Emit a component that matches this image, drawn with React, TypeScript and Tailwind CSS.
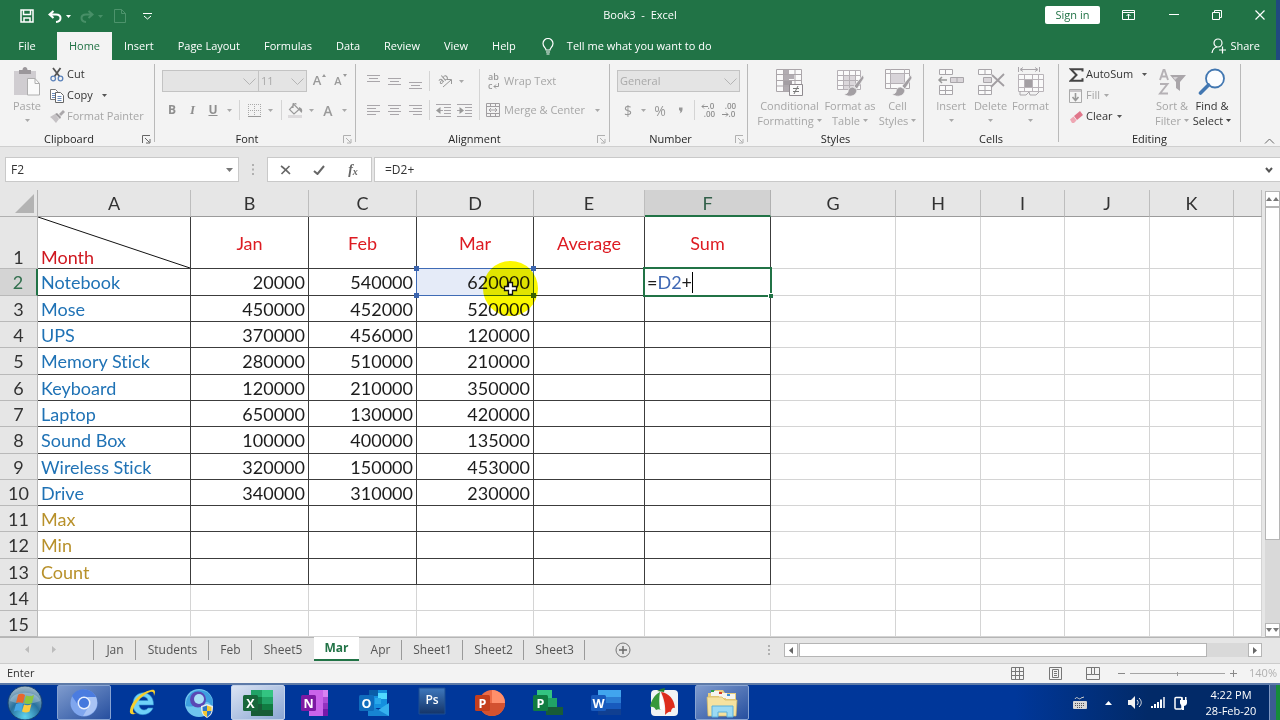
import { Fragment, type ReactNode } from "react";

const GRAY = "#a9a6aa";

/* ---------- small shared pieces ---------- */

function Svg({ w, h, children, label }: { w: number; h: number; children: ReactNode; label?: string }) {
  return (
    <svg width={w} height={h} viewBox={`0 0 ${w} ${h}`} fill="none" className="shrink-0" aria-hidden={label ? undefined : true} aria-label={label}>
      {children}
    </svg>
  );
}

function Caret({ color = "#a9a9a9" }: { color?: string }) {
  return (
    <Svg w={5} h={3}>
      <path d="M0 0h5L2.500 3z" fill={color} />
    </Svg>
  );
}

function Tool({ label, className, children }: { label: string; className: string; children: ReactNode }) {
  return (
    <button type="button" aria-label={label} className={`flex h-[22px] shrink-0 items-center justify-center ${className}`}>
      {children}
    </button>
  );
}

function Sep() {
  return <div className="h-5 w-px shrink-0 bg-[#d4d4d4]" />;
}

function Group({ name, launcher, dark, className, children }: { name: string; launcher?: boolean; dark?: boolean; className: string; children: ReactNode }) {
  const c = dark ? "#666" : "#b0b0b0";
  return (
    <>
      <section aria-label={name} className={`flex shrink-0 flex-col ${className}`}>
        <div className="flex h-[68px]">{children}</div>
        <div className="flex h-[14px] items-center">
          <span className="flex-1 text-center text-[11px] leading-[14px] text-[#262626]">{name}</span>
          {launcher && (
            <button type="button" aria-label={`${name} settings`} className="w-4 pl-1">
              <Svg w={9} h={9}>
                <path d="M.5 8V.5H8M3 3l4.500 4.500M8 4v4H4" stroke={c} />
              </Svg>
            </button>
          )}
        </div>
      </section>
      <div className="mb-1 w-px shrink-0 bg-[#b9b9b9]" />
    </>
  );
}

function Big({ lines, icon, active, className }: { lines: string[]; icon: ReactNode; active?: boolean; className: string }) {
  const color = active ? "#444" : "#a9a9a9";
  return (
    <button type="button" className={`flex shrink-0 flex-col items-center pt-[2px] text-[11px] leading-[15px] whitespace-nowrap ${active ? "text-[#333]" : "text-[#a6a6a6]"} ${className}`}>
      <span className="flex h-8 items-center">{icon}</span>
      <span>{lines[0]}</span>
      <span className="flex h-[15px] items-center gap-[3px]">
        {lines[1]}
        <Caret color={color} />
      </span>
    </button>
  );
}

function Small({ text, icon, active, caret, gap }: { text: string; icon: ReactNode; active?: boolean; caret?: boolean; gap?: string }) {
  return (
    <button type="button" className={`flex h-[21px] items-center text-[11px] whitespace-nowrap ${active ? "text-[#333]" : "text-[#a6a6a6]"}`}>
      <span className="flex w-[17px] items-center">{icon}</span>
      {text}
      {caret && (
        <span className={gap ?? "ml-1"}>
          <Caret color={active ? "#555" : "#a9a9a9"} />
        </span>
      )}
    </button>
  );
}

function Drop({ label, value, className }: { label: string; value: string; className: string }) {
  return (
    <span className={`relative flex h-[22px] shrink-0 ${className}`}>
      <select aria-label={label} disabled className="w-full appearance-none border border-[#c3c3c3] bg-[#e4e4e4] pl-[2px] text-[11px] text-[#a9a9a9] opacity-100">
        <option>{value}</option>
      </select>
      <span className="pointer-events-none absolute top-2 right-[3px]">
        <Svg w={13} h={8}>
          <path d="M.5.5l6 6 6-6" stroke="#b4b4b4" />
        </Svg>
      </span>
    </span>
  );
}

function Lines({ rows, top = 0 }: { rows: [number, number][]; top?: number }) {
  return (
    <Svg w={14} h={15}>
      {rows.map(([x, len], i) => (
        <path key={i} d={`M${x} ${top + 0.5 + i * 3}h${len}`} stroke={GRAY} />
      ))}
    </Svg>
  );
}

/* ---------- ribbon icons ---------- */

const brush = (
  <path d="M28 7l-9 11 3 3 7-11zM18 19c-3 0-5 2-5 5-1 2-3 2-4 2 3 3 10 3 12-1 1-2 1-3 0-4z" fill="#a39fa3" stroke="#f3f3f3" strokeWidth=".7" />
);

const pasteIcon = (
  <Svg w={28} h={30}>
    <path d="M1 4h22v24H1z" fill="#d0cdd1" />
    <path d="M6 7V3h3.500c0-4 5-4 5 0H18v4z" fill="#9b979b" />
    <path d="M14.500 11.500H22l4.500 5v11.500h-12z" fill="#fafafa" stroke="#aeaeae" />
    <path d="M22 11.500v5h4.500" stroke="#aeaeae" />
  </Svg>
);

const cutIcon = (
  <Svg w={14} h={15}>
    <path d="M3 1l6.500 8.500M10.500 1L4.500 9.500" stroke="#555" strokeWidth="1.800" />
    <circle cx="3.200" cy="11.500" r="2.300" stroke="#5b82ba" strokeWidth="1.300" />
    <circle cx="10.500" cy="11.500" r="2.300" stroke="#5b82ba" strokeWidth="1.300" />
  </Svg>
);

const copyIcon = (
  <Svg w={14} h={14}>
    <path d="M.5.5h5l2 2v8h-7z" fill="#fff" stroke="#777" />
    <path d="M2 4.500h3M2 6.500h3M2 8.500h3" stroke="#6b8dbd" />
    <path d="M5.500 3.500h5l3 3v7h-8z" fill="#fff" stroke="#666" />
    <path d="M7.500 7.500h4M7.500 9.500h4M7.500 11.500h4" stroke="#6b8dbd" />
  </Svg>
);

const painterIcon = (
  <Svg w={15} h={13}>
    <path d="M0 7l5-3 4 5-3 4c-2-2-3-4-6-6z" fill="#c5c2c5" />
    <path d="M5 4l2-1 4 4-1 2z" fill="#9d9a9d" />
    <path d="M9 4l4-4 2 2-4 4z" fill="#aaa7aa" />
  </Svg>
);

const conditionalIcon = (
  <Svg w={29} h={29}>
    <path d="M1.500 1.500h25v22h-25z" fill="#fafafa" />
    <path d="M9 1h5v22H9zM9 7h10v4H9z" fill="#b2adb2" />
    <path d="M9 13h8v4H9z" fill="#a39ea3" />
    <path d="M1.500 1.500h25v22h-25zM8.500 1v22M1.500 6.500h25M1.500 12.500h25M1.500 18h25M20 1v22" stroke="#aba6aa" />
    <path d="M14.500 16.500h13v11h-13z" fill="#fafafa" stroke="#8f8a8f" />
    <path d="M18 20.500h6M18 23.500h6M23 18l-4 8" stroke="#777" />
  </Svg>
);

const tableIcon = (
  <Svg w={30} h={29}>
    <path d="M2.500 2.500h23v19h-23z" fill="#fafafa" />
    <path d="M8 7h12v14H8z" fill="#dbd7db" />
    <path d="M2.500 2.500h23v19h-23zM8.500 2v19M14.500 2v19M20.500 2v19M2.500 7.500h23M2.500 12.500h23M2.500 17.500h23" stroke="#b5b0b5" />
    {brush}
  </Svg>
);

const cellStyleIcon = (
  <Svg w={30} h={29}>
    <path d="M2.500 1.500h24v19h-24z" fill="#fafafa" stroke="#aba6aa" />
    <path d="M8 6h13v10H8z" fill="#d8d4d9" />
    <path d="M7.500 1v20M21.500 1v20M2.500 5.500h24M2.500 15.500h24" stroke="#b5b0b5" />
    {brush}
  </Svg>
);

const insertIcon = (
  <Svg w={28} h={28}>
    <path d="M2.500 1.500h13v5h-13zM8.500 1.500v5M2.500 17.500h13v9h-13zM8.500 17.500v9M2.500 22.500h13" fill="#fafafa" stroke={GRAY} />
    <path d="M13.500 9.500h13v5h-13zM20 9.500v5" fill="#d9d5d9" stroke={GRAY} />
    <path d="M10 12H2M5 9l-3 3 3 3" stroke="#999" strokeWidth="1.500" />
  </Svg>
);

const deleteIcon = (
  <Svg w={28} h={28}>
    <path d="M1.500 1.500h13v5h-13zM8 1.500v5M1.500 17.500h13v9h-13zM8 17.500v9M1.500 22.500h13" fill="#fafafa" stroke={GRAY} />
    <path d="M6.500 9.500h8v5h-8z" fill="#d9d5d9" stroke={GRAY} />
    <path d="M15 7l12 11M27 6L14 19" stroke="#a29ea2" strokeWidth="1.800" />
  </Svg>
);

const formatIcon = (
  <Svg w={28} h={30}>
    <path d="M1.500 0v5M22.500 0v5M4 2.500h16M6 .5l-3 2 3 2M18 .5l3 2-3 2" stroke={GRAY} />
    <path d="M1.500 7.500h25v17h-25z" fill="#fafafa" />
    <path d="M8 12h7v8H8z" fill="#a39fa3" />
    <path d="M1.500 7.500h25v17h-25zM7.500 7v18M15.500 7v18M21.500 7v18M1.500 12.500h25M1.500 20.500h25" stroke="#b9b4b9" />
    <path d="M3 24v4h6l3-3 1 3h6l3-3" stroke={GRAY} />
  </Svg>
);

const sortIcon = (
  <Svg w={28} h={28}>
    <path d="M2 12L5.500 2h1L10 12M3.500 8.500h5M2 16h7.500L2 25.500h8" stroke="#b5b1b5" strokeWidth="1.900" />
    <path d="M12 7h16l-6 7v9l-4-3v-6z" fill="#aaa6aa" />
    <path d="M15 9h5l-3 3z" fill="#d5d2d5" />
  </Svg>
);

const findIcon = (
  <Svg w={28} h={28}>
    <circle cx="17" cy="10.500" r="9" fill="#fcfdff" stroke="#4277b1" strokeWidth="1.800" />
    <path d="M10.500 17L2.500 25" stroke="#4277b1" strokeWidth="3.600" strokeLinecap="round" />
  </Svg>
);

const sigmaIcon = (
  <Svg w={15} h={14}>
    <path d="M13.500 3.500V1.200H1.800L7.500 7l-5.700 5.700h11.700v-2.500" stroke="#444" strokeWidth="2" />
  </Svg>
);

const fillIcon = (
  <Svg w={14} h={14}>
    <path d="M.5.5h12v13H.5z" fill="#f5f5f5" stroke="#aaa" />
    <path d="M1 1h11v2H1z" fill="#c9c6c9" />
    <path d="M6.500 4v7M3.500 8l3 3.500 3-3.500" stroke="#999" strokeWidth="1.600" />
  </Svg>
);

const clearIcon = (
  <Svg w={14} h={12}>
    <path d="M5 5l6-5 3 4-6 5z" fill="#e0768a" />
    <path d="M1 8.500L4.500 5.500l3 4L5 12H3z" fill="#eea7b3" />
  </Svg>
);

/* ---------- sheet data ---------- */

const items: [string, string, string, string][] = [
  ["Notebook", "20000", "540000", "620000"],
  ["Mose", "450000", "452000", "520000"],
  ["UPS", "370000", "456000", "120000"],
  ["Memory Stick", "280000", "510000", "210000"],
  ["Keyboard", "120000", "210000", "350000"],
  ["Laptop", "650000", "130000", "420000"],
  ["Sound Box", "100000", "400000", "135000"],
  ["Wireless Stick", "320000", "150000", "453000"],
  ["Drive", "340000", "310000", "230000"],
  ["Max", "", "", ""],
  ["Min", "", "", ""],
  ["Count", "", "", ""],
  ["", "", "", ""],
  ["", "", "", ""],
];
const letters = ["A", "B", "C", "D", "E", "F", "G", "H", "I", "J", "K", ""];
const months = ["Jan", "Feb", "Mar", "Average", "Sum"];
const tallRows = [2, 5, 8, 12];

const inkLine = "border-r border-b border-[#3c3c3c]";
const faintLine = "border-r border-b border-[#d4d4d4]";

function SourceMarker() {
  const handle = "absolute size-[5px] bg-[#3a63ad]";
  return (
    <div className="pointer-events-none absolute -top-px -right-px -bottom-px -left-px border border-[#3f6bb5]">
      <div className={`${handle} -top-[3px] -left-[3px]`} />
      <div className={`${handle} -top-[3px] -right-[3px]`} />
      <div className={`${handle} -bottom-[3px] -left-[3px]`} />
      <div className={`${handle} -right-[3px] -bottom-[3px]`} />
      <div className="absolute -top-2 -right-[5px] size-[55px] rounded-full bg-[#fbf800] mix-blend-multiply" />
      <div className="absolute top-[12px] right-[14px]">
        <Svg w={16} h={16}>
          <path d="M5.500 1.500h4v4h4v4h-4v4h-4v-4h-4v-4h4z" fill="#fff" stroke="#111" strokeWidth="1.300" />
        </Svg>
      </div>
    </div>
  );
}

function SheetGrid() {
  return (
    <table className="w-full table-fixed border-separate border-spacing-0 bg-white font-['Lato',sans-serif] text-[18px] leading-[22px] text-[#1c1c1c] [font-variant-ligatures:none]">
      <colgroup>
        <col className="w-[38px]" />
        <col className="w-[153px]" />
        <col className="w-[118px]" />
        <col className="w-[108px]" />
        <col className="w-[117px]" />
        <col className="w-[111px]" />
        <col className="w-[126px]" />
        <col className="w-[125px]" />
        <col className="w-[85px]" />
        <col className="w-[84px]" />
        <col className="w-[85px]" />
        <col className="w-[84px]" />
        <col />
      </colgroup>
      <thead>
        <tr className="h-[27px] bg-[#e6e6e6]">
          <th className="border-r border-b border-[#b1b1b1] p-0">
            <div className="flex justify-end pr-[3px]">
              <Svg w={19} h={19}>
                <path d="M19 0v19H0z" fill="#b3b3b3" />
              </Svg>
            </div>
          </th>
          {letters.map((l, i) => (
            <th
              key={i}
              scope="col"
              className={
                l === "F"
                  ? "border-r border-b-2 border-r-[#b1b1b1] border-b-[#217346] bg-[#d2d2d2] p-0 font-normal text-[#33604a]"
                  : "border-r border-b border-r-[#bdbdbd] border-b-[#9b9b9b] p-0 font-normal text-[#333]"
              }
            >
              {l}
            </th>
          ))}
        </tr>
      </thead>
      <tbody>
        <tr className="h-[52px]">
          <th scope="row" className="border-r border-b border-[#b9b9b9] bg-[#e6e6e6] p-0 align-bottom font-normal text-[#333]">1</th>
          <td className={`relative p-0 pl-[3px] align-bottom text-[#cf1820] ${inkLine}`}>
            <svg className="absolute inset-0 size-full" viewBox="0 0 152 51" preserveAspectRatio="none" aria-hidden="true">
              <path d="M0 0L152 51" stroke="#111" />
            </svg>
            <span className="relative">Month</span>
          </td>
          {months.map((m) => (
            <td key={m} className={`p-0 text-center text-[#dd1b22] ${inkLine}`}>{m}</td>
          ))}
          {[0, 1, 2, 3, 4, 5].map((n) => (
            <td key={n} className={faintLine} />
          ))}
        </tr>
        {items.map(([name, ...values], i) => {
          const row = i + 2;
          const inside = row <= 13;
          const line = inside ? inkLine : faintLine;
          return (
            <tr key={row} className={tallRows.includes(row) ? "h-[27px]" : "h-[26px]"}>
              <th
                scope="row"
                className={
                  row === 2
                    ? "border-r-2 border-b border-r-[#217346] border-b-[#b9b9b9] bg-[#d4d4d4] p-0 font-normal text-[#33704f]"
                    : "border-r border-b border-[#b9b9b9] bg-[#e6e6e6] p-0 font-normal text-[#333]"
                }
              >
                {row}
              </th>
              <td className={`p-0 pl-[3px] ${row > 10 ? "text-[#b8912b]" : "text-[#1f72b5]"} ${line}`}>{name}</td>
              {values.map((v, c) =>
                row === 2 && c === 2 ? (
                  <td key={c} className={`relative bg-[#e5ebf8] p-0 pr-[3px] text-right ${line}`}>
                    {v}
                    <SourceMarker />
                  </td>
                ) : (
                  <td key={c} className={`p-0 pr-[3px] text-right ${line}`}>{v}</td>
                ),
              )}
              <td className={line} />
              {row === 2 ? (
                <td className={`relative p-0 pl-[2px] ${line}`}>
                  <div className="flex items-center">
                    =<span className="text-[#3f68b4]">D2</span>+<span className="h-[21px] w-px bg-black" />
                  </div>
                  <div className="pointer-events-none absolute -inset-[2px] border-2 border-[#217346]">
                    <div className="absolute -right-[3px] -bottom-[3px] size-[5px] border-t border-l border-white bg-[#217346]" />
                  </div>
                </td>
              ) : (
                <td className={line} />
              )}
              {[0, 1, 2, 3, 4, 5].map((n) => (
                <td key={n} className={faintLine} />
              ))}
            </tr>
          );
        })}
      </tbody>
    </table>
  );
}

/* ---------- taskbar icons ---------- */

function OfficeIcon({ letter, tile, children }: { letter: string; tile: string; children: ReactNode }) {
  return (
    <svg width="32" height="30" viewBox="0 0 32 30" aria-hidden="true">
      {children}
      <rect x="1" y="7" width="15" height="16" rx="1.500" fill={tile} />
      <text x="8.500" y="19.500" fontSize="12.500" fontWeight="700" textAnchor="middle" fill="#fff" fontFamily="Open Sans, sans-serif">{letter}</text>
    </svg>
  );
}

const startIcon = (
  <Svg w={36} h={36}>
    <defs>
      <radialGradient id="orb" cx=".5" cy=".9" r=".9">
        <stop offset="0" stopColor="#5fd3ee" />
        <stop offset=".5" stopColor="#27719f" />
        <stop offset="1" stopColor="#a9bcc9" />
      </radialGradient>
    </defs>
    <circle cx="18" cy="18" r="17" fill="url(#orb)" stroke="#16406f" />
    <path d="M3 16C5 5 31 5 33 16c-10 4-20 4-30 0z" fill="#fff" opacity=".25" />
    <path d="M11 10c3-2 5-1 7 0l-2 8c-3-1-5-1-7 0z" fill="#e8662b" />
    <path d="M19 10.500c3 1 5 1 8-.5l-2 8c-3 1.500-5 1-8 0z" fill="#8cc63e" />
    <path d="M9 19c3-1 5-1 7 0l-2 7.500c-2-1-4-1.500-7 0z" fill="#45a5e5" />
    <path d="M17 19.500c2 1 5 1 7.500-.5l-2 7.500c-3 1.500-5 1-7.500 0z" fill="#fbca3d" />
  </Svg>
);

const tasks: { name: string; active?: "dim" | "bright"; icon: ReactNode }[] = [
  {
    name: "Chromium",
    active: "dim",
    icon: (
      <Svg w={28} h={28}>
        <circle cx="14" cy="14" r="13.500" fill="#7fa6ee" />
        <path d="M2 7C8-3 22-1 26 8H14a6.500 6.500 0 0 0-6 8z" fill="#4b7ce0" />
        <path d="M26 8c4 10-3 19-13 19l6-10c2-3 1-7-2-9z" fill="#a9c4f5" />
        <circle cx="14" cy="14" r="6.500" fill="#e9f0fd" />
        <circle cx="14" cy="14" r="5" fill="#4377dd" />
      </Svg>
    ),
  },
  {
    name: "Internet Explorer",
    icon: (
      <Svg w={30} h={30}>
        <path fillRule="evenodd" d="M26 20c-4 10-21 9-20-5C7 1 27 1 26.500 17H12c1 6 7 6 9 3zM12 12.500h9c-1-5-8-5-9 0z" fill="#6fd2f8" stroke="#2c8fd0" strokeWidth=".6" />
        <path d="M27 8c2-5 1-7-3-6C14 4 4 14 3 22c-1 5 3 5 7 3-3 1-4 0-4-3C8 14 17 6 23 4c3-1 4 0 4 4z" fill="#f6cf2d" />
      </Svg>
    ),
  },
  {
    name: "Browser",
    icon: (
      <Svg w={32} h={30}>
        <circle cx="15" cy="15" r="14" fill="#6fc5ee" />
        <path d="M2 18C1 5 14-2 24 5c4 4 6 9 4 14-2-5-5-6-9-4-5 4-13 4-17 3z" fill="#3d9fe0" />
        <circle cx="14" cy="11.500" r="8" fill="#5a48b5" />
        <circle cx="15" cy="11" r="5" fill="#a9dff7" />
        <path d="M17 18l6-2 6 2c0 6-1 9-6 12-5-3-6-6-6-12z" fill="#e8edf2" />
        <path d="M18.500 19l4.500-1.500V23h-4.300zM23 23h4.500c-.5 3-2 4.500-4.500 6z" fill="#2c77c5" />
        <path d="M23 17.500l4.500 1.500v4H23zM18.600 23H23v6c-3-1.500-4-3-4.400-6z" fill="#f4c832" />
      </Svg>
    ),
  },
  {
    name: "Excel",
    active: "bright",
    icon: (
      <OfficeIcon letter="X" tile="#17673a">
        <path d="M9 2h11v7H9z" fill="#21a366" /><path d="M20 2h11v7H20z" fill="#33c481" />
        <path d="M9 9h11v7H9z" fill="#107c41" /><path d="M20 9h11v7H20z" fill="#21a366" />
        <path d="M9 16h22v12H9z" fill="#185c37" /><path d="M20 16h11v6H20z" fill="#107c41" />
      </OfficeIcon>
    ),
  },
  {
    name: "OneNote",
    icon: (
      <OfficeIcon letter="N" tile="#7d1aa3">
        <path d="M9 2h18v26H9z" fill="#ca64ea" /><path d="M23 2h5v7h-5z" fill="#d983f2" /><path d="M23 9h5v6h-5z" fill="#ae4bd5" /><path d="M23 15h5v6h-5z" fill="#9332bf" /><path d="M23 21h5v7h-5z" fill="#7719aa" />
      </OfficeIcon>
    ),
  },
  {
    name: "Outlook",
    icon: (
      <OfficeIcon letter="O" tile="#0f6cbd">
        <path d="M11 2h18v18H11z" fill="#1490df" /><path d="M11 2h9v6h-9z" fill="#0a5ea8" /><path d="M20 5h9v6h-9z" fill="#50d9ff" /><path d="M17 10h6v6h-6z" fill="#28a8ea" />
        <path d="M10 16l10 6 11-7v13H10z" fill="#35b1ee" /><path d="M10 16l21 12H10z" fill="#1784d2" />
      </OfficeIcon>
    ),
  },
  {
    name: "Photoshop",
    icon: (
      <svg width="28" height="32" viewBox="0 0 28 32" aria-hidden="true">
        <defs>
          <linearGradient id="ps" x1="0" y1="0" x2="0" y2="1">
            <stop offset="0" stopColor="#3f78bd" /><stop offset="1" stopColor="#143468" />
          </linearGradient>
        </defs>
        <path d="M1 1h26v26H1z" fill="url(#ps)" stroke="#1c4f93" />
        <text x="14" y="17" fontSize="12" fontWeight="600" textAnchor="middle" fill="#fff" fontFamily="Open Sans, sans-serif">Ps</text>
      </svg>
    ),
  },
  {
    name: "PowerPoint",
    icon: (
      <OfficeIcon letter="P" tile="#c43e1c">
        <circle cx="18" cy="15" r="13" fill="#ed6c47" /><path d="M18 2a13 13 0 0 1 13 13H18z" fill="#ff8f6b" /><path d="M5 15h26a13 13 0 0 1-26 0z" fill="#d35230" />
      </OfficeIcon>
    ),
  },
  {
    name: "Project",
    icon: (
      <OfficeIcon letter="P" tile="#107c41">
        <path d="M5 2h15v9H5z" fill="#33c481" /><path d="M11 10h14v9H11z" fill="#21a366" /><path d="M14 19h17v8H14z" fill="#185c37" />
      </OfficeIcon>
    ),
  },
  {
    name: "Word",
    icon: (
      <OfficeIcon letter="W" tile="#185abd">
        <path d="M8 2h23v7H8z" fill="#41a5ee" /><path d="M8 9h23v6H8z" fill="#2b7cd3" /><path d="M8 15h23v6H8z" fill="#185abd" /><path d="M8 21h23v6H8z" fill="#103f91" />
      </OfficeIcon>
    ),
  },
  {
    name: "FastStone Capture",
    icon: (
      <Svg w={30} h={30}>
        <rect x="2" y="2" width="27" height="26" rx="4" fill="#f1f3f4" />
        <path d="M11 4C5 7 2 13 1 19c2-1 5 0 6 3 2-1 3-1 5 0 0-7 0-12-1-18z" fill="#37983a" />
        <path d="M8 3l4-2 4-1-1 4z" fill="#277c2a" />
        <path d="M11 4c-1 6-1 12 0 18 1-1 3-1 4 1 0-7-1-13-4-19z" fill="#fff" />
        <path d="M12 4c8 1 13 7 14 16-2-1-4 1-4 4-2-1-4 1-6 3 1-9-1-16-4-23z" fill="#dd2d1c" />
      </Svg>
    ),
  },
  {
    name: "File Explorer",
    active: "dim",
    icon: (
      <Svg w={34} h={30}>
        <path d="M3 5h6l1-3h8l2 3h11v22H3z" fill="#e8cd7c" />
        <path d="M6 3h8v5H6zM14 5h8v5h-8zM21 6h9v5h-9z" fill="#f5f5ef" />
        <path d="M6 2h3v2H6z" fill="#2d9f45" /><path d="M14 4h3v2h-3z" fill="#d43c2a" /><path d="M22 6h3v2h-3z" fill="#3a8fd5" />
        <path d="M2 9h15l3 3h12l-1 16H3z" fill="#f5e2a0" stroke="#d4b65e" strokeWidth=".7" />
        <path d="M7 18h21v11h-6v-5h-9v5H7z" fill="#9bdaf4" stroke="#58b0dc" />
      </Svg>
    ),
  },
];

const sheetTabsBefore = [
  { name: "Jan", w: "w-[42px]" },
  { name: "Students", w: "w-[73px]" },
  { name: "Feb", w: "w-[43px]" },
  { name: "Sheet5", w: "w-[62px]" },
];
const sheetTabsAfter = [
  { name: "Apr", w: "w-[43px]" },
  { name: "Sheet1", w: "w-[61px]" },
  { name: "Sheet2", w: "w-[61px]" },
  { name: "Sheet3", w: "w-[61px]" },
];

export default function App() {
  return (
    <div className="flex min-h-screen flex-col bg-[#e6e6e6] font-['Open_Sans',sans-serif] text-[11px] text-[#333]">
      {/* title and menu tabs */}
      <header className="flex bg-[#217346] text-white">
        <div className="min-w-0 flex-1">
          <div className="relative flex h-8 items-center justify-between">
            <div className="flex items-center pl-5">
              <button type="button" aria-label="Save" className="mr-[14px]">
                <Svg w={14} h={14}>
                  <path d="M1 1h12v12H1zM3.500 1v4.500h7V1M4 13V9h6v4" stroke="#fff" strokeWidth="1.500" />
                </Svg>
              </button>
              <button type="button" aria-label="Undo" className="flex items-center gap-1">
                <Svg w={14} h={13}>
                  <path d="M5.500 1L1.500 4.500 5.500 8M2 4.500h6c6 0 6 7 0 7.500" stroke="#fff" strokeWidth="2" />
                </Svg>
                <Caret color="#fff" />
              </button>
              <button type="button" aria-label="Redo" className="ml-[9px] flex items-center gap-1 opacity-35">
                <Svg w={14} h={13}>
                  <path d="M8.500 1l4 3.500-4 3.500M12 4.500H6c-6 0-6 7 0 7.500" stroke="#8fc5a5" strokeWidth="2" />
                </Svg>
                <Caret color="#8fc5a5" />
              </button>
              <button type="button" aria-label="New" className="ml-[11px] opacity-40">
                <Svg w={12} h={14}>
                  <path d="M.5.5h7l4 4v9H.5zM7.500.5v4h4" stroke="#8fc5a5" />
                </Svg>
              </button>
              <button type="button" aria-label="Customize toolbar" className="ml-[17px]">
                <Svg w={9} h={7}>
                  <path d="M0 .5h9M1 3l3.500 3L8 3" stroke="#fff" />
                </Svg>
              </button>
            </div>
            <div className="absolute inset-x-0 top-[7px] pl-1 text-center text-[11px] leading-4 whitespace-pre text-white">{"Book3  -  Excel"}</div>
            <div className="relative flex items-center pr-[9px] pb-[3px]">
              <button type="button" className="mr-[22px] h-[18px] w-[55px] rounded-xs bg-white text-[11px] leading-[18px] text-[#217346]">Sign in</button>
              <button type="button" aria-label="Ribbon display options" className="mr-[34px]">
                <Svg w={13} h={10}>
                  <path d="M.5.5h12v9H.5zM.5 2.500h12M6.500 9V4M4.500 6l2-2 2 2" stroke="#fff" />
                </Svg>
              </button>
              <button type="button" aria-label="Minimize" className="mr-[33px]">
                <Svg w={10} h={9}><path d="M0 4.500h10" stroke="#fff" /></Svg>
              </button>
              <button type="button" aria-label="Restore" className="mr-[32px]">
                <Svg w={11} h={10}><path d="M.5 2.500h7v7h-7zM2.500 2.500v-2h7v7h-2" stroke="#fff" /></Svg>
              </button>
              <button type="button" aria-label="Close" className="mr-[2px]">
                <Svg w={10} h={10}><path d="M.5.5l9 9M9.500.5l-9 9" stroke="#fff" strokeWidth="1.200" /></Svg>
              </button>
            </div>
          </div>
          <nav aria-label="Ribbon tabs" className="flex h-7 items-stretch whitespace-nowrap">
            <button type="button" className="w-[57px] pr-[3px]">File</button>
            <button type="button" className="w-[55px] bg-[#f3f3f3] text-[#217346]">Home</button>
            {["Insert", "Page Layout", "Formulas", "Data", "Review", "View", "Help"].map((t) => (
              <button key={t} type="button" className="px-3">{t}</button>
            ))}
            <button type="button" className="ml-[14px] flex items-center gap-[13px]">
              <Svg w={12} h={17}>
                <path d="M4 12c0-2-3-3-3-6.500a5 5 0 0 1 10 0C11 9 8 10 8 12zM4 14h4M4.500 16h3" stroke="#fff" strokeWidth="1.200" />
              </Svg>
              Tell me what you want to do
            </button>
            <button type="button" className="mr-4 ml-auto flex items-center gap-1">
              <Svg w={15} h={16}>
                <circle cx="7" cy="5" r="4" stroke="#fff" strokeWidth="1.200" />
                <path d="M1 15c.5-3 2-5.500 5-6M11.500 8.500v7M8 12h7" stroke="#fff" strokeWidth="1.200" />
              </Svg>
              Share
            </button>
          </nav>
        </div>
        <div className="w-1 bg-[#20497f]" />
      </header>

      {/* ribbon */}
      <div className="flex h-[87px] overflow-hidden border-b border-[#cfcfcf] bg-[#f3f3f3] pt-1">
        <Group name="Clipboard" launcher dark className="w-[154px]">
          <Big className="ml-2 w-[38px]" lines={["Paste", ""]} icon={pasteIcon} />
          <div className="ml-1 flex flex-col">
            <Small text="Cut" icon={cutIcon} active />
            <Small text="Copy" icon={copyIcon} active caret gap="ml-[9px]" />
            <Small text="Format Painter" icon={painterIcon} />
          </div>
        </Group>

        <Group name="Font" launcher className="w-[200px]">
          <div className="flex flex-col gap-[7px] pt-[6px] pl-[7px]">
            <div className="flex items-center">
              <Drop label="Font name" value="" className="w-[97px]" />
              <Drop label="Font size" value="11" className="-ml-px w-[49px]" />
              <Tool label="Increase font size" className="ml-[2px] w-[21px] gap-px text-[13px] font-semibold text-[#9a9a9a]">
                A<span className="mb-3"><Svg w={4} h={3}><path d="M0 3h4L2 0z" fill="#999" /></Svg></span>
              </Tool>
              <Tool label="Decrease font size" className="w-[21px] gap-px text-[11px] font-semibold text-[#9a9a9a]">
                A<span className="mb-3"><Svg w={4} h={3}><path d="M0 0h4L2 3z" fill="#999" /></Svg></span>
              </Tool>
            </div>
            <div className="flex items-center text-[12px] text-[#8f8f8f]">
              <Tool label="Bold" className="w-5 font-bold">B</Tool>
              <Tool label="Italic" className="w-[21px] font-['Liberation_Serif',serif] text-[13px] font-bold italic">I</Tool>
              <Tool label="Underline" className="w-5 font-bold underline">U</Tool>
              <Tool label="Underline options" className="mr-1 w-3"><Caret /></Tool>
              <Sep />
              <Tool label="Borders" className="w-[28px]">
                <Svg w={13} h={13}>
                  <path d="M.5 0v12M6.500 0v12M12.500 0v12M0 .5h13M0 6.500h13" stroke="#aaa" strokeDasharray="1 1" />
                  <path d="M0 12.500h13" stroke="#999" />
                </Svg>
              </Tool>
              <Tool label="Border options" className="mr-2 w-[5px]"><Caret /></Tool>
              <Sep />
              <Tool label="Fill color" className="w-[27px]">
                <Svg w={15} h={15}>
                  <path d="M6 1.500l5 5-5 4.500-4.500-4.500zM5 5V1.500c0-2 3-2 3 0" stroke="#999" strokeWidth="1.200" />
                  <path d="M11 4c3 1 4 3 2.500 6L11 7z" fill="#999" />
                  <path d="M0 12h14v3H0z" fill="#dcdadc" />
                </Svg>
              </Tool>
              <Tool label="Fill options" className="w-[5px]"><Caret /></Tool>
              <Tool label="Font color" className="w-[28px] text-[14px] font-semibold text-[#9a9a9a]">A</Tool>
              <Tool label="Font color options" className="w-[5px]"><Caret /></Tool>
            </div>
          </div>
        </Group>

        <Group name="Alignment" launcher className="w-[253px]">
          <div className="flex flex-col gap-[7px] pt-[6px] pl-[7px]">
            <div className="flex items-center">
              <Tool label="Top align" className="w-[21px]"><Lines top={1} rows={[[0, 13], [2, 9], [0, 13]]} /></Tool>
              <Tool label="Middle align" className="w-[21px]"><Lines top={4} rows={[[0, 13], [2, 9], [0, 13]]} /></Tool>
              <Tool label="Bottom align" className="w-[21px]"><Lines top={8} rows={[[0, 13], [2, 9], [0, 13]]} /></Tool>
              <div className="ml-[3px]"><Sep /></div>
              <Tool label="Orientation" className="w-[29px]">
                <svg width="17" height="16" viewBox="0 0 17 16" className="overflow-visible" aria-hidden="true">
                  <text x="3" y="11" fontSize="9" fontWeight="600" fill="#999" transform="rotate(-40 5 9)" fontFamily="Open Sans, sans-serif">ab</text>
                  <path d="M7 14l8-7M11 6.500h4.500V11" stroke="#999" fill="none" />
                </svg>
              </Tool>
              <Tool label="Orientation options" className="w-[5px]"><Caret /></Tool>
            </div>
            <div className="flex items-center">
              <Tool label="Align left" className="w-[21px]"><Lines top={2} rows={[[0, 13], [0, 9], [0, 13], [0, 9]]} /></Tool>
              <Tool label="Center" className="w-[21px]"><Lines top={2} rows={[[0, 13], [2, 9], [0, 13], [2, 9]]} /></Tool>
              <Tool label="Align right" className="w-[21px]"><Lines top={2} rows={[[0, 13], [4, 9], [0, 13], [4, 9]]} /></Tool>
              <div className="ml-[3px]"><Sep /></div>
              <Tool label="Decrease indent" className="ml-[3px] w-[21px]">
                <Svg w={15} h={13}><path d="M0 .5h15M8 3.500h7M8 6.500h7M8 9.500h7M0 12.500h15M7 6.500H1" stroke={GRAY} /><path d="M4.500 3L0 6.500 4.500 10z" fill="#999" /></Svg>
              </Tool>
              <Tool label="Increase indent" className="w-[21px]">
                <Svg w={15} h={13}><path d="M0 .5h15M8 3.500h7M8 6.500h7M8 9.500h7M0 12.500h15M0 6.500h6" stroke={GRAY} /><path d="M2.500 3L7 6.500 2.500 10z" fill="#999" /></Svg>
              </Tool>
            </div>
          </div>
          <div className="mt-[5px] ml-[4px] h-[51px] w-px bg-[#d4d4d4]" />
          <div className="flex flex-col gap-[7px] pt-[6px] pl-[6px] text-[#a6a6a6]">
            <button type="button" className="flex h-[22px] items-center gap-1 whitespace-nowrap">
              <span className="relative flex w-[14px] flex-col pl-[2px] text-left text-[9px] leading-[9px] font-semibold text-[#999]">
                <span className="h-[9px]">ab</span>
                <span className="flex h-[9px] items-center gap-px">
                  <span>c</span>
                  <Svg w={6} h={6}><path d="M5.500 0v3.500H1M3 1.500l-2 2 2 2" stroke="#999" /></Svg>
                </span>
              </span>
              Wrap Text
            </button>
            <button type="button" className="flex h-[22px] items-center gap-1 whitespace-nowrap">
              <Svg w={14} h={14}>
                <path d="M.5.5h13v13H.5zM.5 3.500h13M.5 10.500h13M4.500.5v3M9.500.5v3M4.500 10.500v3M9.500 10.500v3M3 7h8M5 5L3 7l2 2M9 5l2 2-2 2" stroke="#a19ea1" />
              </Svg>
              <span className="mr-[6px]">Merge &amp; Center</span>
              <Caret />
            </button>
          </div>
        </Group>

        <Group name="Number" launcher className="w-[137px]">
          <div className="flex flex-col gap-[7px] pt-[6px] pl-[7px]">
            <Drop label="Number format" value="General" className="w-[123px]" />
            <div className="flex items-center text-[14px] text-[#999]">
              <Tool label="Currency" className="w-[22px]">$</Tool>
              <Tool label="Currency options" className="ml-[2px] w-[5px]"><Caret /></Tool>
              <Tool label="Percent" className="ml-[5px] w-[18px]">%</Tool>
              <Tool label="Comma" className="w-[22px]">
                <Svg w={5} h={9}><path d="M1 1.500h3.500C5 5 3.500 7 1.500 7.500 3 6 2.500 5 1 4z" fill="#999" /></Svg>
              </Tool>
              <div className="ml-[3px]"><Sep /></div>
              <Tool label="Increase decimal" className="ml-[2px] w-[21px] flex-col text-[8px] leading-[8px] font-semibold text-[#8f8f8f]">
                <span className="flex h-2 items-center"><Svg w={7} h={5}><path d="M7 2.500H1M3 .5l-2 2 2 2" stroke="#8f8f8f" /></Svg>.0</span>
                <span className="h-2 pl-1">.00</span>
              </Tool>
              <Tool label="Decrease decimal" className="w-[21px] flex-col text-[8px] leading-[8px] font-semibold text-[#8f8f8f]">
                <span className="h-2 pl-1">.00</span>
                <span className="flex h-2 items-center"><Svg w={7} h={5}><path d="M0 2.500h6M4 .5l2 2-2 2" stroke="#8f8f8f" /></Svg>.0</span>
              </Tool>
            </div>
          </div>
        </Group>

        <Group name="Styles" className="w-[175px]">
          <Big className="ml-[8px] w-[67px]" lines={["Conditional", "Formatting"]} icon={conditionalIcon} />
          <Big className="w-[54px]" lines={["Format as", "Table"]} icon={tableIcon} />
          <Big className="w-[41px]" lines={["Cell", "Styles"]} icon={cellStyleIcon} />
        </Group>

        <Group name="Cells" className="w-[134px]">
          <Big className="ml-[7px] w-10" lines={["Insert", ""]} icon={insertIcon} />
          <Big className="w-[39px]" lines={["Delete", ""]} icon={deleteIcon} />
          <Big className="w-[41px]" lines={["Format", ""]} icon={formatIcon} />
        </Group>

        <Group name="Editing" className="w-[181px]">
          <div className="ml-[10px] flex w-[82px] flex-col">
            <Small text="AutoSum" icon={sigmaIcon} active caret gap="ml-[9px]" />
            <Small text="Fill" icon={fillIcon} caret />
            <Small text="Clear" icon={clearIcon} active caret />
          </div>
          <Big className="ml-[1px] w-[40px]" lines={["Sort &", "Filter"]} icon={sortIcon} />
          <Big active className="w-[40px]" lines={["Find &", "Select"]} icon={findIcon} />
        </Group>

        <button type="button" aria-label="Collapse the ribbon" className="ml-auto flex items-end pr-[5px] pb-[2px]">
          <Svg w={11} h={6}><path d="M1 5.500L5.500 1 10 5.500" stroke="#666" /></Svg>
        </button>
      </div>

      {/* formula bar */}
      <div className="mt-[10px] flex h-[25px] items-stretch text-[12px]">
        <div className="ml-[5px] flex w-[234px] items-center border border-[#c9c9c9] bg-white pr-[5px]">
          <input aria-label="Name box" defaultValue="F2" className="w-full bg-transparent pl-[5px] text-[12px] outline-none" />
          <Svg w={7} h={4}><path d="M0 0h7L3.500 4z" fill="#777" /></Svg>
        </div>
        <div className="flex w-7 items-center justify-center">
          <Svg w={2} h={11}><path d="M0 0h2v2H0zM0 4.500h2v2H0zM0 9h2v2H0z" fill="#b0b0b0" /></Svg>
        </div>
        <div className="flex w-[105px] items-center border border-[#c9c9c9] bg-white">
          <Tool label="Cancel" className="w-[34px]"><Svg w={11} h={10}><path d="M1 1c3 2 6 5 9 8M9.500 1L1.500 9" stroke="#666" strokeWidth="1.600" /></Svg></Tool>
          <Tool label="Accept" className="w-[34px]"><Svg w={12} h={10}><path d="M1 6l3.500 3L11 1" stroke="#666" strokeWidth="2" /></Svg></Tool>
          <Tool label="Insert function" className="w-[34px] font-['Liberation_Serif',serif] text-[14px] font-bold text-[#666] italic"><span>f</span><span className="mt-1 text-[10px]">x</span></Tool>
        </div>
        <div className="ml-[2px] flex flex-1 items-center border border-r-0 border-[#c9c9c9] bg-white pr-[7px]">
          <input aria-label="Formula" defaultValue="=D2+" className="min-w-0 flex-1 bg-transparent pl-[10px] text-[12px] outline-none" />
          <Svg w={8} h={6}><path d="M1 1l3 3.500L7 1" stroke="#555" strokeWidth="2" /></Svg>
        </div>
      </div>

      {/* worksheet */}
      <div className="flex border-b border-[#b5b5b5] pt-2">
        <div className="min-w-0 flex-1"><SheetGrid /></div>
        <div className="ml-[3px] flex w-[15px] flex-col pt-px">
          <button type="button" aria-label="Scroll up" className="flex h-4 items-center justify-center border border-[#b5b5b5] bg-white"><Svg w={13} h={4}><path d="M0 4h6L3 0zM7 4h6l-3-4z" fill="#777" /></Svg></button>
          <div className="h-[333px] border border-[#b5b5b5] bg-white" />
          <div className="flex-1 bg-[#d9d9d9]" />
          <button type="button" aria-label="Scroll down" className="flex h-[14px] items-center justify-center border border-[#b5b5b5] bg-white"><Svg w={13} h={4}><path d="M0 0h6L3 4zM7 0h6l-3 4z" fill="#777" /></Svg></button>
        </div>
      </div>

      {/* sheet tabs */}
      <div className="flex h-[25px] items-start text-[12px] text-[#555]">
        <div className="flex h-[23px] w-[93px] shrink-0 items-center gap-[23px] pl-[25px]">
          <button type="button" aria-label="Previous sheet"><Svg w={4} h={7}><path d="M4 0v7L0 3.500z" fill="#bcbcbc" /></Svg></button>
          <button type="button" aria-label="Next sheet"><Svg w={4} h={7}><path d="M0 0v7l4-3.500z" fill="#bcbcbc" /></Svg></button>
        </div>
        <div className="mt-[2px] h-5 w-px bg-[#9a9a9a]" />
        {sheetTabsBefore.map((t, i) => (
          <Fragment key={t.name}>
            <button type="button" className={`h-[23px] shrink-0 ${t.w}`}>{t.name}</button>
            {i < 3 && <div className="mt-[2px] -ml-px h-5 w-px bg-[#9a9a9a]" />}
          </Fragment>
        ))}
        <button type="button" className="-mt-px h-6 w-[45px] shrink-0 border-b-2 border-[#217346] bg-white font-bold text-[#217346]">Mar</button>
        {sheetTabsAfter.map((t) => (
          <Fragment key={t.name}>
            <button type="button" className={`h-[23px] shrink-0 ${t.w}`}>{t.name}</button>
            <div className="mt-[2px] -ml-px h-5 w-px bg-[#9a9a9a]" />
          </Fragment>
        ))}
        <button type="button" aria-label="New sheet" className="mt-1 ml-[30px]">
          <Svg w={16} h={16}><circle cx="8" cy="8" r="7" stroke="#777" /><path d="M8 4v8M4 8h8" stroke="#666" strokeWidth="1.400" /></Svg>
        </button>
        <div className="ml-auto flex h-6 w-[512px] items-center">
          <Svg w={2} h={10}><path d="M0 0h2v2H0zM0 4h2v2H0zM0 8h2v2H0z" fill="#b0b0b0" /></Svg>
          <button type="button" aria-label="Scroll left" className="ml-[14px] flex h-[14px] w-[14px] items-center justify-center border border-[#b5b5b5] bg-white"><Svg w={4} h={7}><path d="M4 0v7L0 3.500z" fill="#666" /></Svg></button>
          <div className="flex h-[14px] flex-1 bg-[#d9d9d9]">
            <div className="ml-px w-[408px] border border-[#b5b5b5] bg-white" />
          </div>
          <button type="button" aria-label="Scroll right" className="mr-[18px] flex h-[14px] w-[14px] items-center justify-center border border-[#b5b5b5] bg-white"><Svg w={4} h={7}><path d="M0 0v7l4-3.500z" fill="#666" /></Svg></button>
        </div>
      </div>

      {/* status bar */}
      <div className="flex h-5 items-center border-t border-[#cccccc] bg-[#f3f3f3] pl-[7px]">
        <span>Enter</span>
        <div className="ml-auto flex items-center">
          <button type="button" aria-label="Normal view" className="mr-[25px]"><Svg w={13} h={13}><path d="M.5.500h12v12H.5zM4.500 0v13M8.500 0v13M0 4.500h13M0 8.500h13" stroke="#777" /></Svg></button>
          <button type="button" aria-label="Page layout view" className="mr-[24px]"><Svg w={13} h={13}><path d="M.5.500h12v12H.5zM3.500 2.500h6v8h-6zM5 4.500h3M5 6.500h3M5 8.500h3" stroke="#777" /></Svg></button>
          <button type="button" aria-label="Page break view" className="mr-[18px]"><Svg w={14} h={13}><path d="M.5.500h13v12H.5zM5.500.500v7h3v-7M.5 7.500h5M8.500 7.500h5" stroke="#777" /></Svg></button>
          <button type="button" aria-label="Zoom out"><Svg w={7} h={7}><path d="M0 3.500h7" stroke="#888" /></Svg></button>
          <div className="relative mx-[5px] flex h-3 w-[95px] items-center">
            <div className="h-px w-full bg-[#a5a5a5]" />
            <input type="range" aria-label="Zoom" defaultValue="50" className="absolute inset-0 w-full opacity-0" />
            <div className="absolute left-[47px] h-1 w-px bg-[#999]" />
          </div>
          <button type="button" aria-label="Zoom in"><Svg w={7} h={7}><path d="M0 3.500h7M3.500 0v7" stroke="#888" /></Svg></button>
          <span className="mr-[3px] ml-3 text-[#b0b0b0]">140%</span>
        </div>
      </div>

      {/* taskbar */}
      <footer className="flex h-[37px] items-center border-t-2 border-[#5d7aa8] bg-[#00379a] text-white">
        <button type="button" aria-label="Start" className="flex w-[55px] justify-center pr-[5px]">{startIcon}</button>
        {tasks.map((t) => (
          <div key={t.name} className="flex w-[58px] shrink-0 justify-center self-stretch">
            <button
              type="button"
              aria-label={t.name}
              className={`flex w-[54px] items-center justify-center ${
                t.active === "bright"
                  ? "rounded-xs border border-[#c3d2ea] bg-linear-to-br from-[#dbe4f3] to-[#8ba6d3]"
                  : t.active === "dim"
                    ? "rounded-xs border border-[#87a3d2] bg-linear-to-br from-[#7f9bcd] to-[#274f9f]"
                    : ""
              }`}
            >
              {t.icon}
            </button>
          </div>
        ))}
        <div className="flex flex-1 items-center justify-end self-stretch bg-linear-to-r from-[#00379a] via-[#00379a] to-[#022a68] to-75%">
          <button type="button" aria-label="Keyboard" className="mr-[18px] ml-auto">
            <Svg w={14} h={13}><path d="M2 3c2-4 4 2 6-1l3-1" stroke="#ccc" /><rect y="5" width="14" height="8" rx="1" fill="#d7d7d7" /><path d="M2 7.500h10M2 9.500h10M4 11.500h6" stroke="#555" strokeDasharray="1 1" /></Svg>
          </button>
          <button type="button" aria-label="Show hidden icons" className="mr-4"><Svg w={7} h={4}><path d="M0 4h7L3.500 0z" fill="#fff" /></Svg></button>
          <button type="button" aria-label="Volume" className="mr-[9px]"><Svg w={14} h={13}><path d="M0 4h3l4-4v13L3 9H0z" fill="#f2f2f2" /><path d="M9 4c1.500 1.500 1.500 3.500 0 5M11 2c3 3 3 6 0 9" stroke="#e6e6e6" /></Svg></button>
          <button type="button" aria-label="Network" className="mr-[9px]"><Svg w={14} h={11}><path d="M0 9h2v2H0zM3 7h2v4H3zM6 5h2v6H6zM9 2.500h2V11H9z" fill="#fff" /><path d="M12 0h2v11h-2z" fill="#b9c3d6" /></Svg></button>
          <button type="button" aria-label="Power" className="mr-3"><Svg w={14} h={14}><rect x="1" y="1.500" width="7" height="11.500" rx="1" stroke="#fff" strokeWidth="1.500" /><path d="M6 4h7v3c0 2-2 3-3 3v4H8v-4C7 9 6 8 6 7zM7 1h1.500v3H7zM11 1h1.500v3H11z" fill="#fff" /></Svg></button>
          <div className="flex w-[62px] flex-col items-center text-[11px] leading-4 whitespace-nowrap">
            <span>4:22 PM</span>
            <span>28-Feb-20</span>
          </div>
          <button type="button" aria-label="Show desktop" className="ml-[7px] flex w-[11px] justify-end self-stretch border-l border-[#8098c2] bg-[#3c5c92]">
            <span className="w-1 self-stretch bg-[#168c39]" />
          </button>
        </div>
      </footer>
    </div>
  );
}
